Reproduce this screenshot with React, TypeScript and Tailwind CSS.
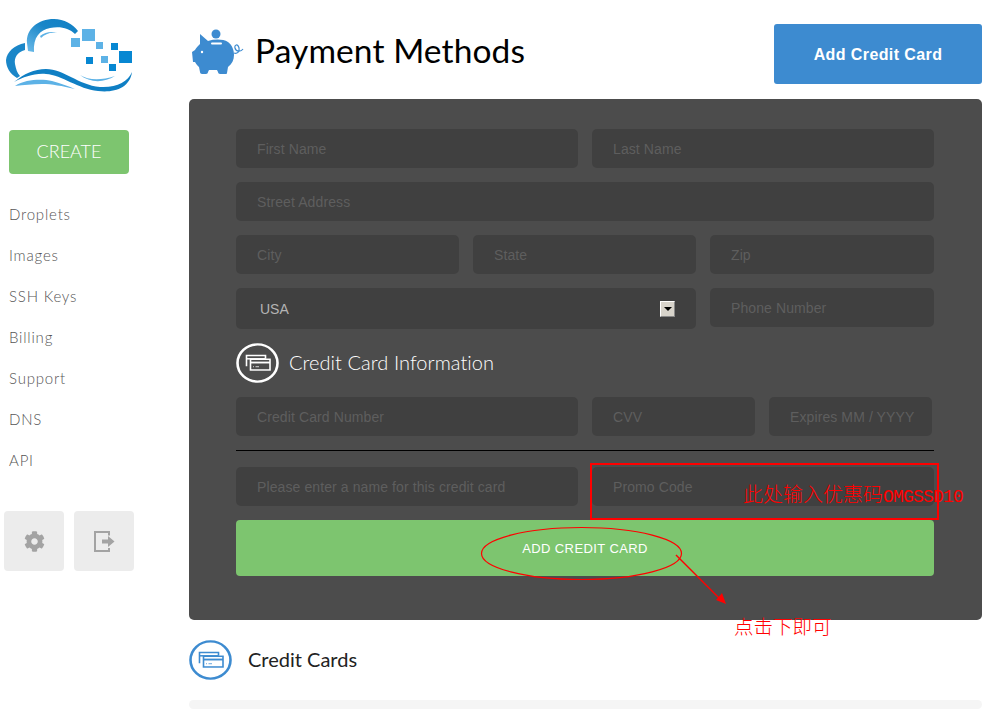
import { FaCog } from 'react-icons/fa'

const sans = 'font-["Liberation_Sans",Arial,sans-serif]'

const navItems = ['Droplets', 'Images', 'SSH Keys', 'Billing', 'Support', 'DNS', 'API']

function Logo() {
  return (
    <svg width="140" height="95" viewBox="0 0 140 95" className="block">
      <defs>
        <linearGradient id="cloudArc" x1="0" y1="1" x2="1" y2="0">
          <stop offset="0" stopColor="#6cbbe9" />
          <stop offset="0.55" stopColor="#1a86c8" />
          <stop offset="1" stopColor="#0f7fc4" />
        </linearGradient>
      </defs>
      {/* cloud */}
      <path d="M27 43C26 29 38 19 54 19C64 19 73 24 78 31L75 34C69 28 60 26 50 28C40 30 33 37 34 52L28 51Z" fill="url(#cloudArc)" />
      <path d="M40 36C45 32 52 31 57 33C50 32 45 34 41 38Z" fill="#5db2e6" />
      <path d="M25 43L25 50C17 52 14 58 15 64C16 69 17 73 20 76L17 78C10 74 6 67 6 60C7 52 14 45 25 43Z" fill="#1a86c8" />
      {/* waves */}
      <path d="M14 82C24 74 34 69 46 69C64 69 78 85 100 87C116 88 128 82 132 72C130 88 114 93 98 91C78 89 62 75 46 74C34 73 24 77 14 82Z" fill="#0f7fc4" />
      <path d="M15 86C26 79 42 79 52 81C60 83 68 86 75 89C62 86 52 84 42 84C32 84 24 85 15 86Z" fill="#5db2e6" />
      <path d="M80 75C88 80 100 81 115 76C104 83 90 83 80 75Z" fill="#5db2e6" />
      {/* pixels */}
      <rect x="71" y="38" width="9" height="9" fill="#5db2e6" />
      <rect x="82" y="29" width="13" height="12" fill="#5db2e6" />
      <rect x="96" y="42" width="7" height="7" fill="#5db2e6" />
      <rect x="111" y="43" width="7" height="7" fill="#0787d2" />
      <rect x="119" y="51" width="13" height="12" fill="#0787d2" />
      <rect x="86" y="57" width="7" height="7" fill="#0787d2" />
      <rect x="101" y="56" width="7" height="7" fill="#5db2e6" />
      <rect x="109" y="64" width="7" height="7" fill="#0787d2" />
    </svg>
  )
}

function Piggy() {
  return (
    <svg width="54" height="50" viewBox="0 0 54 50" className="block shrink-0">
      <circle cx="24" cy="6" r="4.5" fill="#3d8bd0" />
      <path d="M8 6L16 13C23 11 31 11 36 14C40 17 42 22 42 27C42 32 40 36 36 39L35 45C35 46 34 46 33 46H28C27 46 26 45 26 44L25 42H17L16 44C16 45 15 46 14 46H10C9 46 8 45 8 44L7 39C5 37 4 36 3 34H1L0 24L3 22C4 20 6 18 8 16Z" fill="#3d8bd0" />
      <rect x="19" y="14.5" width="11" height="2" rx="1" fill="#ffffff" />
      <circle cx="10" cy="24" r="1.2" fill="#ffffff" />
      <path d="M42 25C45 26 48 24 47 20C46 15 42 17 43 20C44 24 49 24 51 21" fill="none" stroke="#3d8bd0" strokeWidth="1.2" />
    </svg>
  )
}

function CardsIcon({ color, height }: { color: string; height: number }) {
  return (
    <svg width="43" height={height} viewBox="0 0 43 43" preserveAspectRatio="none" className="block shrink-0">
      <ellipse cx="21.5" cy="21.5" rx="20" ry="20" fill="none" stroke={color} strokeWidth="2.6" />
      <path d="M10.5 25V13.5H29.5V17" fill="none" stroke={color} strokeWidth="1.6" />
      <path d="M10.5 17H29.5" stroke={color} strokeWidth="1.6" />
      <rect x="14.5" y="17.5" width="19.5" height="11.5" fill="none" stroke={color} strokeWidth="1.6" />
      <path d="M14.5 21H34" stroke={color} strokeWidth="2" />
      <path d="M17 25.5H18M19.5 25.5H23" stroke={color} strokeWidth="0.8" />
    </svg>
  )
}

function Field({ placeholder, className }: { placeholder: string; className: string }) {
  return (
    <input
      placeholder={placeholder}
      className={`h-[39px] rounded-[5px] bg-[#404040] pl-[21px] text-[14px] tracking-[0.1px] text-[#ccc] outline-none placeholder:text-[#5e5e5e] ${sans} ${className}`}
    />
  )
}

function Sidebar() {
  return (
    <aside className="flex w-[189px] shrink-0 flex-col">
      <div className="h-[130px]">
        <Logo />
      </div>
      <button className='ml-[9px] h-[44px] w-[120px] rounded-[4px] bg-[#7dc56f] pb-[2px] font-["Lato",sans-serif] text-[18px] font-light text-white'>
        CREATE
      </button>
      <nav className='mt-[20px] ml-[9px] flex flex-col font-["Lato",sans-serif] text-[15px] font-light tracking-[0.8px] text-[#555]'>
        {navItems.map((item) => (
          <a key={item} className="flex h-[41px] items-center">
            {item}
          </a>
        ))}
      </nav>
      <div className="mt-[30px] ml-[4px] flex gap-[10px]">
        <button className="flex h-[60px] w-[60px] items-center justify-center rounded-[4px] bg-[#ececec] text-[#a3a3a3]">
          <FaCog size={21} />
        </button>
        <button className="flex h-[60px] w-[60px] items-center justify-center rounded-[4px] bg-[#ececec]">
          <svg width="21" height="21" viewBox="0 0 21 21">
            <path d="M15 4.5V1H1V20H15V17" fill="none" stroke="#a3a3a3" strokeWidth="2" />
            <path d="M8 8.5H14V5L20.5 10.5L14 16V12.5H8Z" fill="#a3a3a3" />
          </svg>
        </button>
      </div>
    </aside>
  )
}

function PaymentPanel() {
  return (
    <section className="flex h-[521px] flex-col rounded-[5px] bg-[#4c4c4c] pt-[30px] pl-[47px]">
      <div className="flex w-[698px] gap-[14px]">
        <Field placeholder="First Name" className="w-[342px]" />
        <Field placeholder="Last Name" className="w-[342px]" />
      </div>
      <Field placeholder="Street Address" className="mt-[14px] w-[698px]" />
      <div className="mt-[14px] flex w-[698px] gap-[14px]">
        <Field placeholder="City" className="w-[223px]" />
        <Field placeholder="State" className="w-[223px]" />
        <Field placeholder="Zip" className="w-[224px]" />
      </div>
      <div className="mt-[14px] flex w-[698px] items-start gap-[14px]">
        <div className={`flex h-[41px] w-[460px] items-center justify-between rounded-[5px] bg-[#404040] pr-[21px] pl-[24px] text-[14px] text-[#b4b4b4] ${sans}`}>
          <span className="pt-[2px]">USA</span>
          <span className="flex h-[16px] w-[15px] items-center justify-center border border-t-white border-r-[#888] border-b-[#888] border-l-white bg-[#d8d4cb]">
            <span className="h-0 w-0 border-x-[4px] border-t-[4px] border-x-transparent border-t-black" />
          </span>
        </div>
        <Field placeholder="Phone Number" className="w-[224px]" />
      </div>
      <div className="mt-[14px] flex h-[40px] items-center gap-[10px]">
        <CardsIcon color="#ffffff" height={40} />
        <h2 className='-mt-[2px] font-["Lato",sans-serif] text-[20px] font-light tracking-[0.05px] text-white'>Credit Card Information</h2>
      </div>
      <div className="mt-[14px] flex gap-[14px]">
        <Field placeholder="Credit Card Number" className="w-[342px]" />
        <Field placeholder="CVV" className="w-[163px]" />
        <Field placeholder="Expires MM / YYYY" className="w-[163px] tracking-[-0.1px]" />
      </div>
      <div className="mt-[14px] h-px w-[698px] bg-black" />
      <div className="mt-[16px] flex gap-[14px]">
        <Field placeholder="Please enter a name for this credit card" className="w-[342px]" />
        <Field placeholder="Promo Code" className="w-[342px]" />
      </div>
      <button className={`mt-[14px] h-[56px] w-[698px] rounded-[4px] bg-[#7dc56f] pt-[1px] text-[13px] tracking-[0.4px] text-white ${sans}`}>
        ADD CREDIT CARD
      </button>
    </section>
  )
}

// red markup someone drew on top of the screenshot
function Annotations() {
  return (
    <>
      <div className="absolute top-[463px] left-[590px] h-[57px] w-[349px] border-2 border-[#f00]" />
      <svg width="991" height="709" viewBox="0 0 991 709" className="pointer-events-none absolute top-0 left-0">
        <ellipse cx="581.5" cy="553.5" rx="100" ry="26" fill="none" stroke="#f00" strokeWidth="1.2" />
        <path d="M676 555L722 601" stroke="#f00" strokeWidth="1.5" />
        <path d="M726 604L716 600L722 593Z" fill="#f00" />
      </svg>
      <p className='absolute top-[481px] left-[743px] font-["Noto_Sans_CJK_SC",sans-serif] text-[20px] leading-[26px] font-light whitespace-nowrap text-[#f00]'>
        此处输入优惠码<span className='font-["Liberation_Mono",monospace] text-[18px] tracking-[-0.8px]'>OMGSSD10</span>
      </p>
      <p className='absolute top-[613px] left-[734px] font-["Noto_Sans_CJK_SC",sans-serif] text-[19.5px] leading-[26px] font-light whitespace-nowrap text-[#f00]'>
        点击下即可
      </p>
    </>
  )
}

export default function App() {
  return (
    <div className="relative flex h-[709px] w-[991px] overflow-hidden bg-white">
      <Sidebar />
      <main className="flex w-[793px] flex-col pt-[24px]">
        <header className="flex h-[60px] items-center justify-between">
          <div className="flex items-center">
            <div className="-mt-[2px] ml-[3px]">
              <Piggy />
            </div>
            <h1 className='-mt-[7px] ml-[9px] font-["Lato",sans-serif] text-[33.5px] tracking-[0.1px] text-black'>Payment Methods</h1>
          </div>
          <button className={`h-[60px] w-[208px] rounded-[3px] bg-[#3d8bd0] pt-[2px] text-[16px] font-bold tracking-[0.4px] text-white ${sans}`}>
            Add Credit Card
          </button>
        </header>
        <div className="mt-[15px]">
          <PaymentPanel />
        </div>
        <div className="mt-[20px] flex items-center gap-[16px]">
          <CardsIcon color="#3d8bd0" height={40} />
          <h2 className='-mt-[2px] font-["Lato",sans-serif] text-[20px] text-[#222]'>Credit Cards</h2>
        </div>
        <div className="mt-[20px] h-[60px] rounded-[5px] bg-[#f5f5f5]" />
      </main>
      <Annotations />
    </div>
  )
}
